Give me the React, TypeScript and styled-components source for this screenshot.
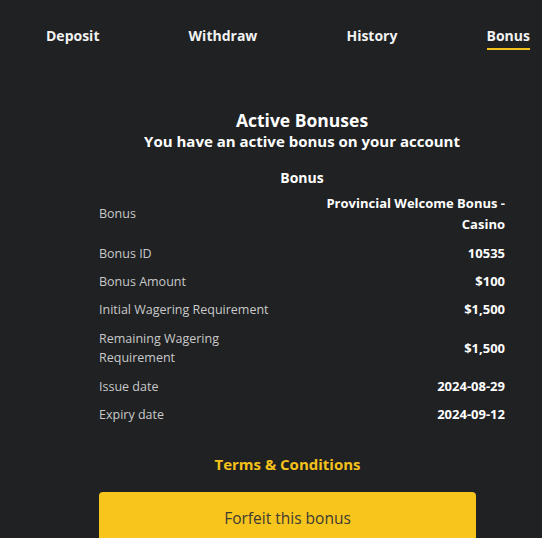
import styled, { createGlobalStyle } from "styled-components";

const GlobalStyle = createGlobalStyle`
  html, body {
    margin: 0;
    padding: 0;
    background: #1f2123;
  }
  body {
    font-family: "Open Sans", "Liberation Sans", sans-serif;
    color: #ffffff;
  }
`;

const tabs = ["Deposit", "Withdraw", "History", "Bonus"];

const rows: { label: string[]; value: string[] }[] = [
  { label: ["Bonus"], value: ["Provincial Welcome Bonus -", "Casino"] },
  { label: ["Bonus ID"], value: ["10535"] },
  { label: ["Bonus Amount"], value: ["$100"] },
  { label: ["Initial Wagering Requirement"], value: ["$1,500"] },
  { label: ["Remaining Wagering", "Requirement"], value: ["$1,500"] },
  { label: ["Issue date"], value: ["2024-08-29"] },
  { label: ["Expiry date"], value: ["2024-09-12"] },
];

const App = () => {
  return (
    <Page>
      <GlobalStyle />
      <TabBar>
        {tabs.map((t) => (
          <Tab key={t} $active={t === "Bonus"}>
            {t}
          </Tab>
        ))}
      </TabBar>

      <Content>
        <Title>Active Bonuses</Title>
        <Subtitle>You have an active bonus on your account</Subtitle>

        <Details>
          <SectionHead>Bonus</SectionHead>
          {rows.map((r) => (
            <Row key={r.label.join(" ")}>
              <Label $multi={r.label.length > 1}>
                {r.label.map((l) => (
                  <div key={l}>{l}</div>
                ))}
              </Label>
              <Value $multi={r.value.length > 1}>
                {r.value.map((v) => (
                  <div key={v}>{v}</div>
                ))}
              </Value>
            </Row>
          ))}
        </Details>

        <TermsLink>Terms &amp; Conditions</TermsLink>
        <ButtonWrap>
          <ForfeitButton>Forfeit this bonus</ForfeitButton>
        </ButtonWrap>
      </Content>
    </Page>
  );
};

export default App;

const Page = styled.div`
  width: 542px;
  height: 538px;
  overflow: hidden;
  background: #1f2123;
`;

const TabBar = styled.div`
  display: flex;
  justify-content: space-between;
  align-items: flex-start;
  padding: 26px 12px 0 46px;
  height: 50px;
  box-sizing: border-box;
`;

const Tab = styled.div<{ $active?: boolean }>`
  font-size: 14px;
  font-weight: 700;
  color: #f2f2f2;
  line-height: 20px;
  padding-bottom: 2px;
  border-bottom: 2px solid ${(p) => (p.$active ? "#f5c21b" : "transparent")};
`;

const Content = styled.div`
  width: 406px;
  margin: 59.5px 0 0 99px;
  display: flex;
  flex-direction: column;
  align-items: stretch;
`;

const Title = styled.div`
  text-align: center;
  font-size: 17.5px;
  font-weight: 700;
  line-height: 20px;
`;

const Subtitle = styled.div`
  margin-top: 3.5px;
  text-align: center;
  font-size: 15px;
  font-weight: 700;
  line-height: 17px;
`;

const Details = styled.div`
  margin-top: 19px;
  display: flex;
  flex-direction: column;
`;

const SectionHead = styled.div`
  text-align: center;
  font-size: 14px;
  font-weight: 700;
  line-height: 18px;
  margin-bottom: 1px;
`;

const Row = styled.div`
  display: flex;
  justify-content: space-between;
  align-items: center;
  padding: 4.5px 0;
`;

const Label = styled.div<{ $multi?: boolean }>`
  font-size: 12.5px;
  line-height: 19px;
  color: #c9c9c9;
  padding: ${(p) => (p.$multi ? "1px 0" : "0")};
`;

const Value = styled.div<{ $multi?: boolean }>`
  font-size: 13px;
  font-weight: 700;
  line-height: ${(p) => (p.$multi ? "21px" : "18px")};
  color: #ffffff;
  text-align: right;
`;

const TermsLink = styled.div`
  margin-top: 26px;
  margin-right: 29px;
  text-align: center;
  font-size: 15px;
  font-weight: 700;
  color: #f5c21b;
  line-height: 20px;
`;

const ButtonWrap = styled.div`
  margin-top: 18px;
  display: flex;
`;

const ForfeitButton = styled.button`
  width: 377px;
  height: 56px;
  border: none;
  border-radius: 4px;
  background: #f8c51d;
  color: #3d3b33;
  font-family: "Open Sans", "Liberation Sans", sans-serif;
  font-size: 15.5px;
  font-weight: 500;
  padding: 0 0 4px;
`;
